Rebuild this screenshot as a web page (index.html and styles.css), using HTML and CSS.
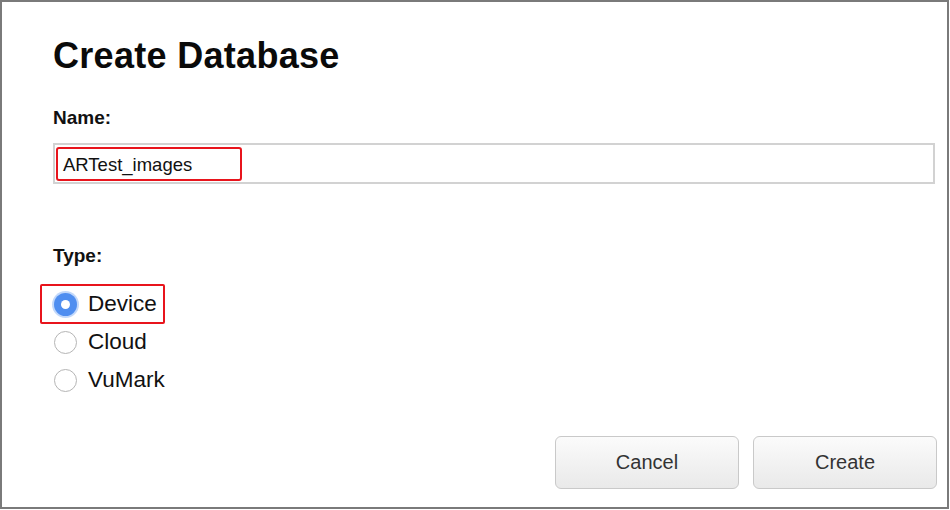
FILE: index.html
```html
<!DOCTYPE html>
<html>
<head>
<meta charset="utf-8">
<link rel="stylesheet" href="styles.css">
</head>
<body>
<div class="frame">
  <h1 class="title">Create Database</h1>
  <div class="label name-label">Name:</div>
  <div class="input">
    <span class="hl-text">ARTest_images</span>
  </div>
  <div class="label type-label">Type:</div>
  <div class="radios">
    <div class="radio-row selected-row">
      <span class="radio checked"><span class="dot"></span></span>
      <span class="radio-text">Device</span>
    </div>
    <div class="radio-row">
      <span class="radio"></span>
      <span class="radio-text">Cloud</span>
    </div>
    <div class="radio-row">
      <span class="radio"></span>
      <span class="radio-text">VuMark</span>
    </div>
  </div>
  <div class="actions">
    <button class="btn">Cancel</button>
    <button class="btn">Create</button>
  </div>
</div>
</body>
</html>
```
FILE: styles.css
```css
html, body {
  margin: 0;
  padding: 0;
  background: #ffffff;
}
body {
  font-family: "Liberation Sans", Arial, sans-serif;
  color: #111;
}
.frame {
  box-sizing: border-box;
  width: 949px;
  height: 509px;
  border: 2px solid #7a7a7a;
  padding: 0 10px 0 51px;
  display: flex;
  flex-direction: column;
}
.title {
  margin: 32px 0 0 0;
  font-size: 36px;
  font-weight: 700;
  letter-spacing: 0.3px;
  line-height: 44px;
  color: #0a0a0a;
}
.label {
  font-size: 19px;
  font-weight: 700;
  line-height: 24px;
  color: #111;
}
.name-label {
  margin-top: 28px;
}
.input {
  margin-top: 13px;
  margin-right: 2px;
  box-sizing: border-box;
  height: 41px;
  border: 2px solid #d2d2d2;
  padding: 2px 0 0 1px;
}
.hl-text {
  display: inline-block;
  box-sizing: border-box;
  width: 186px;
  height: 34px;
  border: 2px solid #e8141c;
  border-radius: 3px;
  padding: 5px 0 0 5px;
  font-size: 18.5px;
  line-height: 22px;
  color: #111;
}
.type-label {
  margin-top: 60px;
}
.radios {
  margin-top: 16px;
  display: flex;
  flex-direction: column;
  align-items: flex-start;
  margin-left: -13px;
}
.radio-row {
  box-sizing: border-box;
  height: 38px;
  display: flex;
  align-items: center;
  gap: 11px;
  padding-left: 12px;
  padding-right: 6px;
  border: 2px solid transparent;
}
.selected-row {
  height: 40px;
  border-color: #e8141c;
  border-radius: 2px;
  margin-bottom: -1px;
}
.radio {
  box-sizing: border-box;
  width: 23px;
  height: 23px;
  border-radius: 50%;
  border: 1.5px solid #b5b5b5;
  background: #fff;
  display: flex;
  align-items: center;
  justify-content: center;
}
.radio.checked {
  border: none;
  background: #4f8ef0;
  box-shadow: 0 0 0 2px rgba(120, 168, 245, 0.45);
}
.dot {
  width: 9px;
  height: 9px;
  border-radius: 50%;
  background: #fff;
}
.radio-text {
  font-size: 22.5px;
  line-height: 28px;
  color: #111;
}
.actions {
  margin-top: auto;
  margin-bottom: 18px;
  display: flex;
  justify-content: flex-end;
  gap: 14px;
}
.btn {
  box-sizing: border-box;
  width: 184px;
  height: 53px;
  border: 1.5px solid #c9c9c9;
  border-radius: 6px;
  background: linear-gradient(#fbfbfb, #e9e9e9);
  font-family: "Liberation Sans", Arial, sans-serif;
  font-size: 20px;
  color: #333;
  padding: 0;
}
```
